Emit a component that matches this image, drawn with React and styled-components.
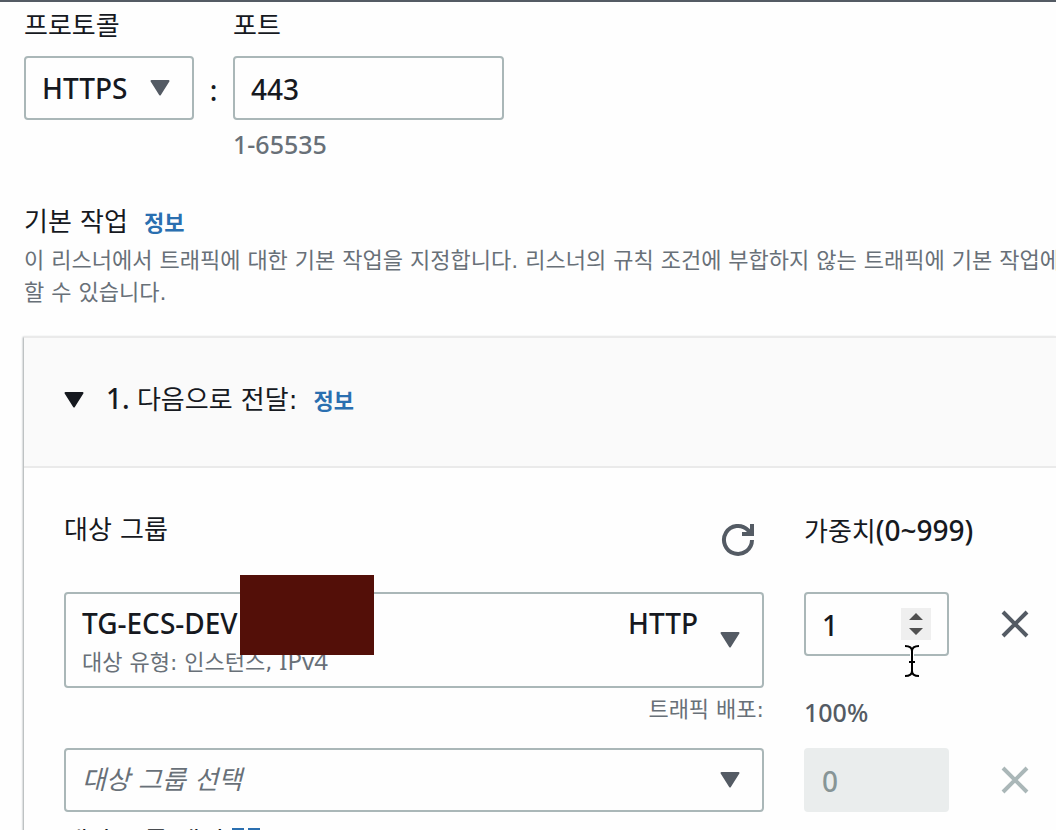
import React from "react";
import styled, { createGlobalStyle } from "styled-components";

const hangul = `"DejaVu Sans", "Noto Sans CJK KR", sans-serif`;
const latin = `"Noto Sans", "Noto Sans CJK KR", sans-serif`;

const GlobalStyle = createGlobalStyle`
  *, *::before, *::after { box-sizing: border-box; }
  body {
    margin: 0;
    background: #fefefe;
    color: #16191f;
    font-family: ${hangul};
    font-size: 26px;
    line-height: 32px;
    overflow: hidden;
  }
  button, input, select { font: inherit; color: inherit; margin: 0; }
  input[type="number"] { appearance: textfield; }
  input[type="number"]::-webkit-inner-spin-button { display: none; }
`;

const Page = styled.main`
  border-top: 2px solid #545b64;
  padding: 8px 0 0 24px;
`;

const PortRow = styled.div`
  display: flex;
  align-items: flex-start;
`;

const Field = styled.div`
  display: flex;
  flex-direction: column;
  width: ${(p) => p.$width}px;
`;

const Label = styled.label`
  display: block;
  line-height: 32px;
  margin-bottom: 14px;
  white-space: nowrap;
`;

const Latin = styled.span`
  font-family: ${latin};
  font-size: 28px;
  font-weight: 500;
`;

const Colon = styled.span`
  font-family: ${latin};
  font-size: 28px;
  font-weight: 500;
  width: 39px;
  padding-top: 64px;
  text-align: center;
`;

const Hint = styled.span`
  font-family: ${(p) => (p.$latin ? latin : hangul)};
  font-size: ${(p) => (p.$latin ? 25 : 22)}px;
  font-weight: ${(p) => (p.$latin ? 500 : 400)};
  color: ${(p) => (p.$dark ? "#545b64" : "#687078")};
`;

const HintLatin = styled.span`
  font-family: ${latin};
  font-size: 24px;
`;

const SelectBox = styled.div`
  display: grid;
  align-items: center;
  > * { grid-area: 1 / 1; }
  > svg {
    justify-self: end;
    margin-right: 24px;
    pointer-events: none;
  }
`;

const Select = styled.select`
  appearance: none;
  width: 100%;
  height: 64px;
  padding: 0 16px;
  border: 2px solid #aab7b8;
  border-radius: 4px;
  background: #fefefe;
  font-family: ${(p) => (p.$placeholder ? hangul : latin)};
  font-size: ${(p) => (p.$placeholder ? 26 : 28)}px;
  font-style: ${(p) => (p.$placeholder ? "italic" : "normal")};
  font-weight: ${(p) => (p.$placeholder ? 400 : 500)};
  color: ${(p) => (p.$placeholder ? "#687078" : "#16191f")};
`;

const Input = styled.input`
  width: 100%;
  height: 64px;
  padding: 2px 16px 0;
  border: 2px solid #aab7b8;
  border-radius: 4px;
  background: #fefefe;
  font-family: ${latin};
  font-size: 28px;
  font-weight: 500;
  &:disabled {
    border-color: #eaeded;
    background: #eaeded;
    color: #879596;
  }
`;

const Section = styled.section`
  padding-top: 25px;
`;

const Title = styled.h2`
  margin: 0;
  font-size: 26px;
  font-weight: 400;
  line-height: 34px;
`;

const InfoLink = styled.a`
  margin-left: 16px;
  font-size: 22px;
  font-weight: 700;
  color: #2a6fb0;
  text-decoration: none;
`;

const Description = styled.p`
  margin: 4px 0 27px;
  font-size: 22px;
  line-height: 32px;
  color: #687078;
  white-space: nowrap;
`;

const Panel = styled.section`
  border-top: 2px solid #eaeaea;
  box-shadow: -1px 1px 2px #a0a6a8;
`;

const PanelHeader = styled.header`
  display: flex;
  align-items: center;
  height: 130px;
  padding: 0 40px 4px;
  background: #fafafa;
  border-bottom: 2px solid #eaeaea;
`;

const ToggleButton = styled.button`
  display: flex;
  padding: 0;
  margin-right: 22px;
  border: 0;
  background: none;
`;

const Grid = styled.div`
  display: grid;
  grid-template-columns: minmax(0, 700px) 145px 52px;
  column-gap: 40px;
  align-items: start;
  padding: 46px 0 0 40px;
`;

const GroupHead = styled.div`
  display: flex;
  justify-content: space-between;
  height: 78px;
`;

const IconButton = styled.button`
  display: flex;
  padding: 0;
  border: 0;
  background: none;
  margin: ${(p) => p.$margin || "0"};
`;

const TargetButton = styled.button`
  display: flex;
  align-items: center;
  width: 100%;
  height: 96px;
  padding: 0 22px 0 16px;
  border: 2px solid #aab7b8;
  border-radius: 4px;
  background: #fefefe;
  text-align: left;
`;

const TargetText = styled.span`
  flex: 1;
  display: flex;
  flex-direction: column;
`;

const TargetName = styled.span`
  display: flex;
  justify-content: space-between;
  margin-right: 22px;
  line-height: 44px;
`;

const Anchor = styled.div`
  position: relative;
`;

const Redaction = styled.div`
  position: absolute;
  left: 176px;
  top: -17px;
  width: 134px;
  height: 80px;
  background: #530f08;
`;

const Stepper = styled.span`
  position: absolute;
  right: 18px;
  top: 16px;
  display: flex;
  width: 30px;
  height: 32px;
  background: #efefef;
`;

const Cursor = styled.svg`
  position: absolute;
  left: 99px;
  top: 52px;
`;

const Traffic = styled.div`
  padding: ${(p) => p.$top}px 0 0;
  height: 60px;
  text-align: ${(p) => p.$align || "left"};
  line-height: 32px;
`;

const CreateLink = styled.a`
  display: flex;
  align-items: center;
  gap: 8px;
  margin-top: 14px;
  color: #16191f;
  text-decoration: none;
`;

const Caret = ({ color = "#545b64" }) => (
  <svg width="20" height="16" viewBox="0 0 20 16" aria-hidden="true">
    <path d="M1.500 1h17L10 14.500z" fill={color} stroke={color} strokeWidth="2" strokeLinejoin="round" />
  </svg>
);

const Refresh = () => (
  <svg width="34" height="34" viewBox="0 0 34 34" fill="none" stroke="#545b64" strokeWidth="4" aria-hidden="true">
    <path d="M31 17A14 14 0 1 1 27 7.100L29.500 11" />
    <path d="M31 1v10H21" />
  </svg>
);

const Cross = ({ color = "#545b64" }) => (
  <svg width="28" height="28" viewBox="0 0 28 28" stroke={color} strokeWidth="4" aria-hidden="true">
    <path d="M2 2l24 24M26 2L2 26" />
  </svg>
);

const External = () => (
  <svg width="28" height="28" viewBox="0 0 28 28" fill="none" stroke="#2a6fb0" strokeWidth="4" aria-hidden="true">
    <path d="M12 2H2v24h24V16M16 2h10v10M26 2L12 16" />
  </svg>
);

export default function App() {
  return (
    <>
      <GlobalStyle />
      <Page>
        <PortRow>
          <Field $width={170}>
            <Label htmlFor="protocol">프로토콜</Label>
            <SelectBox>
              <Select id="protocol"><option>HTTPS</option></Select>
              <Caret />
            </SelectBox>
          </Field>
          <Colon>:</Colon>
          <Field $width={271}>
            <Label htmlFor="port">포트</Label>
            <Input id="port" defaultValue="443" />
            <Traffic $top={8}><Hint $latin>1-65535</Hint></Traffic>
          </Field>
        </PortRow>

        <Section>
          <Title>기본 작업<InfoLink href="#info">정보</InfoLink></Title>
          <Description>
            이 리스너에서 트래픽에 대한 기본 작업을 지정합니다. 리스너의 규칙 조건에 부합하지 않는 트래픽에 기본 작업에
            <br />
            할 수 있습니다.
          </Description>
        </Section>

        <Panel>
          <PanelHeader>
            <ToggleButton aria-label="접기"><Caret color="#16191f" /></ToggleButton>
            <Title><Latin>1. </Latin>다음으로 전달:<InfoLink href="#forward">정보</InfoLink></Title>
          </PanelHeader>
          <Grid>
            <GroupHead>
              <Label as="span">대상 그룹</Label>
              <IconButton aria-label="새로 고침" $margin="9px 9px 0 0"><Refresh /></IconButton>
            </GroupHead>
            <Label htmlFor="weight1">가중치<Latin>(0~999)</Latin></Label>
            <span />

            <Anchor>
              <TargetButton>
                <TargetText>
                  <TargetName><Latin>TG-ECS-DEV</Latin><Latin>HTTP</Latin></TargetName>
                  <Hint>대상 유형: 인스턴스, <HintLatin>IPv4</HintLatin></Hint>
                </TargetText>
                <Caret />
              </TargetButton>
              <Redaction />
            </Anchor>
            <Anchor>
              <Input id="weight1" type="number" defaultValue="1" />
              <Stepper>
                <svg width="30" height="32" viewBox="0 0 30 32" fill="#505050" aria-hidden="true">
                  <path d="M8 12h14l-7-7zM8 20h14l-7 7z" />
                </svg>
              </Stepper>
              <Cursor width="18" height="34" viewBox="0 0 18 34" fill="none" aria-hidden="true">
                <path d="M2 2c4 0 7 1 7 5v20c0 4-3 5-7 5M16 2c-4 0-7 1-7 5v20c0 4 3 5 7 5M6 18h6" stroke="#fff" strokeWidth="4" />
                <path d="M2 2c4 0 7 1 7 5v20c0 4-3 5-7 5M16 2c-4 0-7 1-7 5v20c0 4 3 5 7 5M6 18h6" stroke="#000" strokeWidth="2" />
              </Cursor>
            </Anchor>
            <IconButton aria-label="제거" $margin="18px 0 0 12px"><Cross /></IconButton>

            <Traffic $top={4} $align="right"><Hint>트래픽 배포:</Hint></Traffic>
            <Traffic $top={8}><Hint $latin $dark>100%</Hint></Traffic>
            <span />

            <div>
              <SelectBox>
                <Select $placeholder aria-label="대상 그룹 선택"><option>대상 그룹 선택</option></Select>
                <Caret />
              </SelectBox>
              <CreateLink href="#create">대상 그룹 생성<External /></CreateLink>
            </div>
            <Input aria-label="가중치" defaultValue="0" disabled />
            <IconButton aria-label="제거" disabled $margin="18px 0 0 12px"><Cross color="#aab7b8" /></IconButton>
          </Grid>
        </Panel>
      </Page>
    </>
  );
}
